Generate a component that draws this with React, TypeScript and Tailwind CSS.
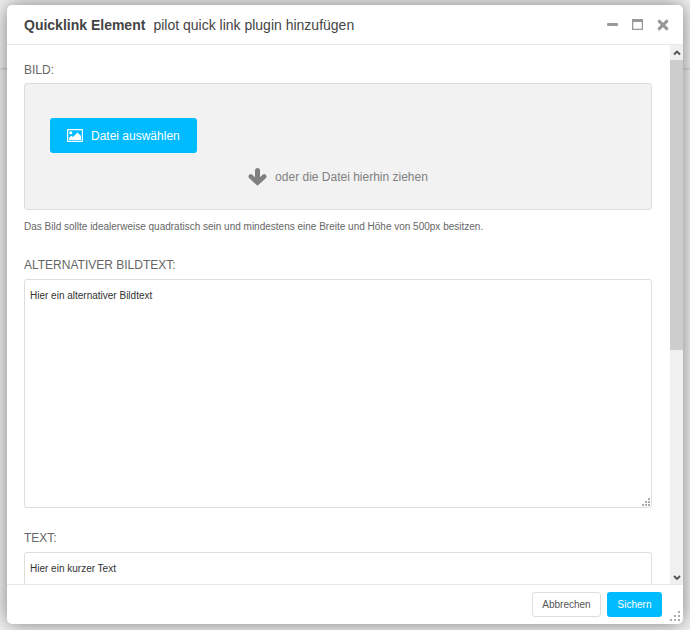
import React from 'react';

const arrow = 'h-2.5 w-2.5 stroke-[#505050]';

function Grip({ className, step }: { className: string; step: number }) {
  const dots = [
    [2, 0],
    [1, 1],
    [2, 1],
    [0, 2],
    [1, 2],
    [2, 2],
  ];
  const size = step * 2 + 2;
  return (
    <svg viewBox={`0 0 ${size} ${size}`} className={className} aria-hidden="true">
      {dots.map(([x, y]) => (
        <rect key={`${x}-${y}`} x={x * step} y={y * step} width="2" height="2" />
      ))}
    </svg>
  );
}

function TextField({ id, label, value }: { id: string; label: string; value: string }) {
  return (
    <div className="mt-[19px]">
      <label htmlFor={id} className="mb-[3px] block text-xs leading-[22px] text-[#666]">
        {label}
      </label>
      <div className="relative">
        <textarea
          id={id}
          defaultValue={value}
          className="block h-[229px] w-full resize-none rounded-[3px] border border-[#ddd] bg-white px-[5px] py-[7px] text-[10px] leading-[18px] text-[#333] outline-none"
        />
        <Grip step={3} className="absolute right-0.5 bottom-0.5 h-2 w-2 fill-[#aaa]" />
      </div>
    </div>
  );
}

export default function App() {
  return (
    <div className="relative h-screen overflow-hidden bg-[#f4f4f4] px-[7px] pt-[5px] pb-1.5 font-['Liberation_Sans',Arial,sans-serif]">
      <div className="absolute inset-x-0 top-0 h-[68px] bg-[#f4f4f4] shadow-[0_0_3px_rgba(0,0,0,0.3)]" />
      <div className="relative flex h-full flex-col overflow-hidden rounded-[5px] bg-white shadow-[0_0_20px_rgba(0,0,0,0.5)]">
        <header className="flex h-10 shrink-0 items-center border-b border-[#e8e8e8] pr-3.5 pl-[17px] text-[#444]">
          <h1 className="text-sm font-bold">Quicklink Element</h1>
          <span className="ml-2 text-sm">pilot quick link plugin hinzufügen</span>
          <div className="ml-auto flex items-center gap-3.5">
            <button type="button" aria-label="Minimieren">
              <svg viewBox="0 0 11 11" className="h-[11px] w-[11px] fill-[#999]">
                <rect y="4" width="11" height="3" rx="1" />
              </svg>
            </button>
            <button type="button" aria-label="Maximieren">
              <svg viewBox="0 0 11 11" className="h-[11px] w-[11px] fill-[#999]">
                <path fillRule="evenodd" d="M0 0h11v11H0zM1.300 3v6.700h8.400V3z" />
              </svg>
            </button>
            <button type="button" aria-label="Schließen">
              <svg viewBox="0 0 12 12" className="h-3 w-3 stroke-[#999]">
                <path d="M2.300 2.300l7.400 7.400M9.700 2.300l-7.400 7.400" strokeWidth="3.200" strokeLinecap="round" />
              </svg>
            </button>
          </div>
        </header>

        <div className="flex min-h-0 flex-1">
          <main className="min-w-0 flex-1 overflow-hidden pt-3.5 pr-[18px] pl-[17px]">
            <label htmlFor="bild" className="mb-0.5 block text-xs leading-[22px] text-[#666]">
              BILD:
            </label>
            <div className="rounded-[3px] border border-[#ddd] bg-[#f2f2f2] pt-[34px] pb-[22px]">
              <button
                id="bild"
                type="button"
                className="ml-[25px] flex h-[35px] items-center gap-2 rounded-[3px] bg-[#00bbff] px-[17px] text-xs text-white"
              >
                <svg viewBox="0 0 16 13" className="h-[13px] w-4 fill-white" aria-hidden="true">
                  <path
                    fillRule="evenodd"
                    d="M1 0h14a1 1 0 0 1 1 1v11a1 1 0 0 1-1 1H1a1 1 0 0 1-1-1V1a1 1 0 0 1 1-1zM1.200 1.200v10.600h13.600V1.200z"
                  />
                  <circle cx="3.800" cy="3.800" r="1.500" />
                  <path d="M2 11V9l2.300-2.300L6 8l4.500-4.500L14 7v4z" />
                </svg>
                Datei auswählen
              </button>
              <p className="mt-3.5 flex h-5 items-center justify-center gap-2 text-xs text-[#808080]">
                <svg viewBox="0 0 19 18" className="h-[18px] w-[19px] fill-none stroke-[#808080]" aria-hidden="true">
                  <path d="M9.500 2.500v11" strokeWidth="5" strokeLinecap="round" />
                  <path d="M2.800 8.500l6.700 6.200 6.700-6.200" strokeWidth="4.600" strokeLinecap="round" />
                </svg>
                oder die Datei hierhin ziehen
              </p>
            </div>
            <p className="mt-2 text-[10px] leading-[17px] text-[#666]">
              Das Bild sollte idealerweise quadratisch sein und mindestens eine Breite und Höhe von 500px besitzen.
            </p>
            <TextField id="alt" label="ALTERNATIVER BILDTEXT:" value="Hier ein alternativer Bildtext" />
            <TextField id="text" label="TEXT:" value="Hier ein kurzer Text" />
          </main>
          <div className="flex w-[13px] shrink-0 flex-col bg-[#f0f0f0]" aria-hidden="true">
            <div className="flex h-[15px] shrink-0 items-center justify-center">
              <svg viewBox="0 0 10 10" fill="none" className={arrow}>
                <path d="M2 6.500l3-3 3 3" strokeWidth="1.800" />
              </svg>
            </div>
            <div className="min-h-0 flex-1">
              <div className="h-[57%] bg-[#cdcdcd]" />
            </div>
            <div className="flex h-[15px] shrink-0 items-center justify-center">
              <svg viewBox="0 0 10 10" fill="none" className={arrow}>
                <path d="M2 4l3 3 3-3" strokeWidth="1.800" />
              </svg>
            </div>
          </div>
        </div>

        <footer className="flex h-10 shrink-0 items-center justify-end gap-1.5 border-t border-[#e8e8e8] pr-[21px] text-[10px]">
          <button type="button" className="h-[25px] w-[69px] rounded-[3px] border border-[#ddd] bg-white text-[#555]">
            Abbrechen
          </button>
          <button type="button" className="h-[25px] w-[55px] rounded-[3px] bg-[#00bbff] text-white">
            Sichern
          </button>
        </footer>
        <Grip step={4} className="absolute right-[3px] bottom-[3px] h-2.5 w-2.5 fill-[#aaa]" />
      </div>
    </div>
  );
}
